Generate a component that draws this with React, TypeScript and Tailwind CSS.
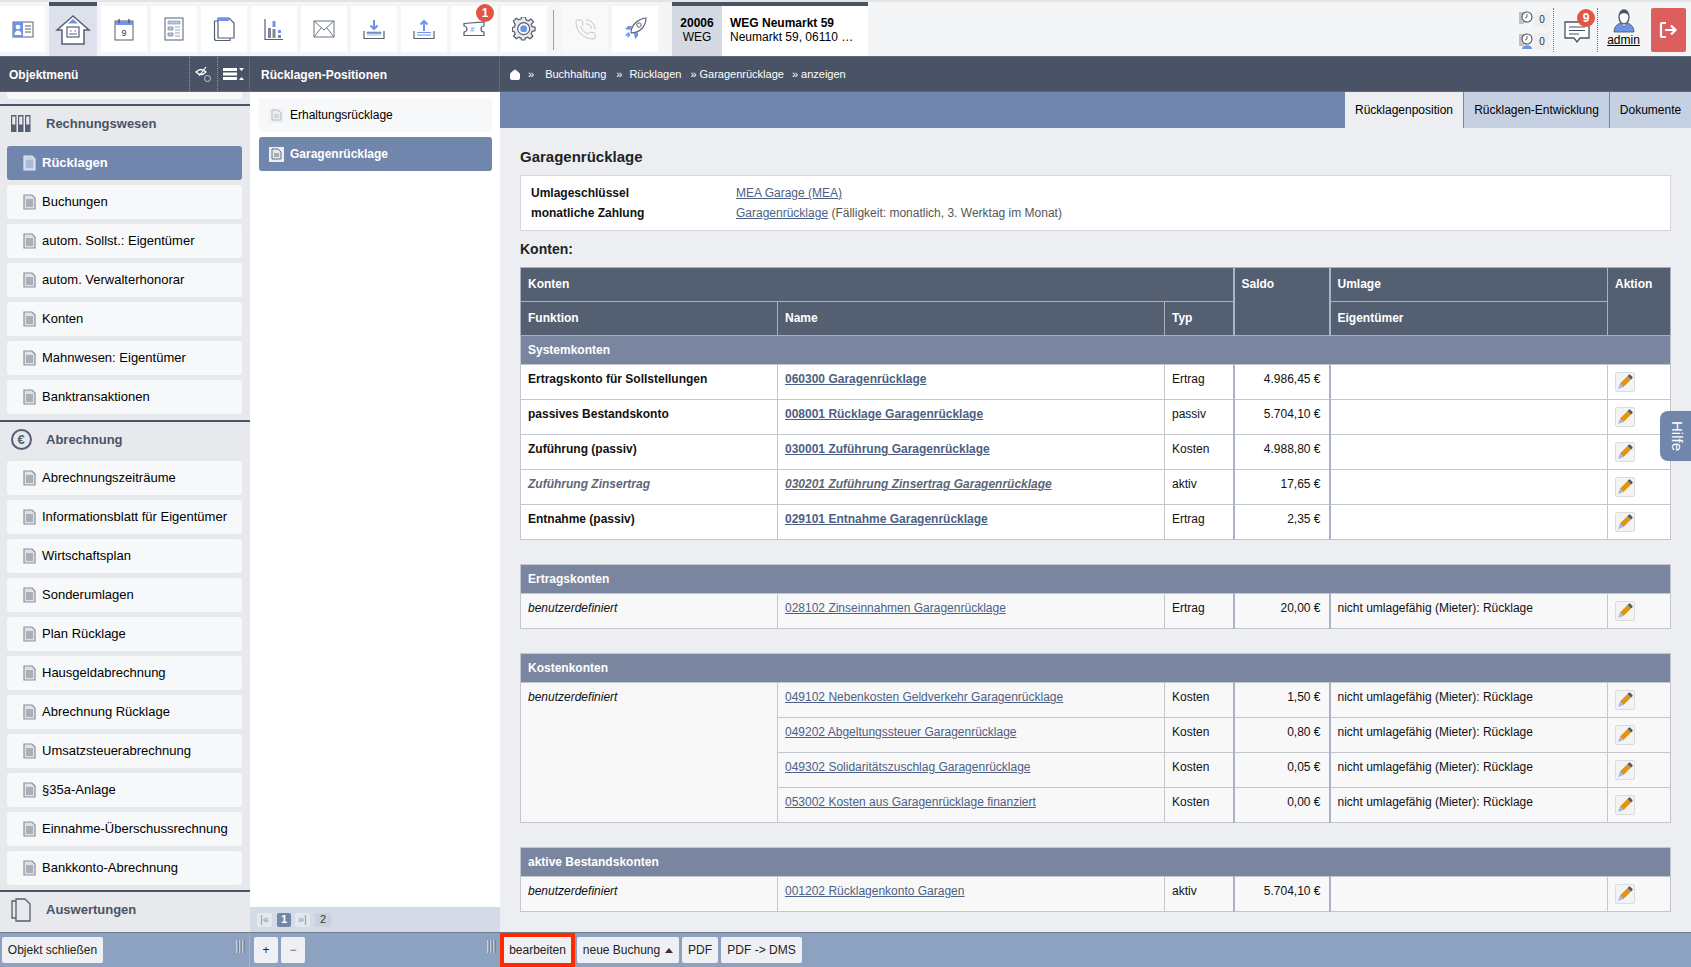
import React from "react";
import { Home, PhoneCall } from "lucide-react";

const FONT = "font-['Liberation_Sans',Arial,sans-serif]";
const BLUE = "#6f93e8";

const DocIcon = ({ light }: { light?: boolean }) => (
  <svg width="13" height="16" viewBox="0 0 13 16" className="shrink-0">
    <path d="M1 1h8l3 3v11H1z" fill={light ? "#c9d3e6" : "#dfe1e6"} stroke={light ? "#dfe5f0" : "#8b909c"} strokeWidth="1.200" />
    <path d="M3 6h7M3 8h7M3 10h7M3 12h7" stroke={light ? "#8ea1c4" : "#777c88"} strokeWidth="1" />
  </svg>
);

const SquareDoc = ({ active }: { active?: boolean }) => (
  <span className={`flex h-[15px] w-[15px] items-center justify-center ${active ? "bg-[#eceef3]" : "bg-[#f0f1f3]"}`}>
    <svg width="11" height="12" viewBox="0 0 11 12">
      <path d="M1 1h6l3 3v7H1z" fill={active ? "#e6e8ec" : "#eceef0"} stroke={active ? "#666f80" : "#b5b8bf"} />
      <path d="M3 6h5M3 8h5" stroke={active ? "#666f80" : "#b5b8bf"} />
    </svg>
  </span>
);

const Pencil = () => (
  <span className="mt-[7px] ml-[7px] flex h-[20px] w-[20px] items-center justify-center rounded-[2px] border border-[#dcdcdc] bg-[#f3f3f3]">
    <svg width="16" height="16" viewBox="0 0 16 16">
      <path d="M3 9.500 10.500 2l3.500 3.500L6.500 13z" fill="#e09411" />
      <path d="M10.500 2l1.300-1.300a1 1 0 0 1 1.400 0l2.100 2.100a1 1 0 0 1 0 1.400L14 5.500z" fill="#4f5a6e" />
      <path d="M3 9.500 6.500 13 1 15z" fill="#9db8f2" />
    </svg>
  </span>
);

const stroke = { fill: "none", stroke: "#565f72", strokeWidth: 1.2 };

const toolIcons: React.ReactNode[] = [
  <svg key="card" width="22" height="17" viewBox="0 0 22 17">
    <rect x="1" y="1" width="20" height="15" fill="#fff" stroke="#565f72" />
    <rect x="1" y="1" width="10" height="15" fill={BLUE} />
    <circle cx="6" cy="6" r="2.300" fill="#fff" />
    <path d="M2.500 14c0-6 7-6 7 0z" fill="#fff" />
    <path d="M13 5h6M13 8h6M13 11h6" stroke="#565f72" />
  </svg>,
  <svg key="home" width="36" height="32" viewBox="0 0 36 32">
    <path d="M18 2 2 16h5v14h22V16h5z" fill="#fff" stroke="#565f72" strokeWidth="1.500" />
    <path d="M18 5l-5 4.500h10z" fill={BLUE} />
    <rect x="12" y="13" width="12" height="10" {...stroke} />
    <path d="M15 17h1.500M19.500 17H21M14 20h8" stroke="#565f72" />
  </svg>,
  <svg key="cal" width="20" height="23" viewBox="0 0 20 23">
    <rect x="1" y="3" width="18" height="19" fill="#fff" stroke="#565f72" />
    <rect x="1" y="3" width="18" height="4" fill={BLUE} />
    <path d="M5 1v4M15 1v4" stroke="#565f72" strokeWidth="1.500" />
    <text x="10" y="18" fontSize="9" textAnchor="middle" fill="#333" fontFamily="Liberation Sans">9</text>
  </svg>,
  <svg key="form" width="20" height="24" viewBox="0 0 20 24">
    <rect x="1" y="1" width="18" height="22" fill="#fff" stroke="#565f72" />
    <rect x="4" y="4" width="12" height="3" fill="#b4c6ee" stroke="#7f8ca5" strokeWidth=".6" />
    <path d="M4 10h5v3H4zM11 10h5M11 13h5M4 16h5v3H4zM11 16h5M11 19h5" fill="#b4c6ee" stroke="#7f8ca5" strokeWidth=".8" />
  </svg>,
  <svg key="copy" width="22" height="25" viewBox="0 0 22 25">
    <path d="M5 1h11l5 5v15H5z" fill="#fff" stroke="#565f72" strokeWidth="1.200" />
    <path d="M5 1h11v3H5z" fill={BLUE} />
    <path d="M5 4H1.500v17.500a2 2 0 0 0 2 2H17V21" {...stroke} />
  </svg>,
  <svg key="chart" width="20" height="23" viewBox="0 0 20 23">
    <path d="M1 1v20.500h18" {...stroke} />
    <rect x="4" y="10" width="3" height="10" fill="#7e8798" />
    <rect x="8.500" y="3" width="3" height="6" fill={BLUE} />
    <rect x="8.500" y="11" width="3" height="9" fill="#7e8798" />
    <rect x="14" y="12" width="3" height="3" fill={BLUE} />
    <rect x="14" y="17" width="3" height="3" fill="#7e8798" />
  </svg>,
  <svg key="mail" width="22" height="18" viewBox="0 0 22 18">
    <rect x="1" y="1" width="20" height="16" fill="#fff" stroke="#6a7385" />
    <path d="M1 1l10 9 10-9M1 17l7.500-9.500M21 17l-7.500-9.500" fill="none" stroke="#6a7385" />
  </svg>,
  <svg key="down" width="22" height="21" viewBox="0 0 22 21">
    <path d="M1 12v7.500h20V12" {...stroke} />
    <path d="M11 1v8M7.500 6.500 11 10l3.500-3.500" fill="none" stroke={BLUE} strokeWidth="2" />
    <path d="M4 13h14v1.500H4zM4 16h14" fill={BLUE} stroke="#7e8798" strokeWidth=".6" />
  </svg>,
  <svg key="up" width="22" height="21" viewBox="0 0 22 21">
    <path d="M1 12v7.500h20V12" {...stroke} />
    <path d="M11 12V2M7.500 5.500 11 2l3.500 3.500" fill="none" stroke={BLUE} strokeWidth="2" />
    <path d="M4 13.500h14M4 16h14" stroke={BLUE} strokeWidth="1" />
  </svg>,
  <svg key="ticket" width="22" height="16" viewBox="0 0 22 16">
    <path d="M1 2.500 21 1v4a3 3 0 0 0 0 6v3.500H1V11a3 3 0 0 0 0-6z" fill="#fff" stroke="#565f72" strokeWidth="1.200" />
    <text x="9.500" y="11" fontSize="7" textAnchor="middle" fill={BLUE} fontFamily="Liberation Sans">#</text>
  </svg>,
  <svg key="gear" width="24" height="24" viewBox="0 0 24 24">
    <path d="M10 1h4l.6 3 2.400 1 2.600-1.700 2.800 2.800L20 8.700l1 2.400 3 .6v3.600l-3 .6-1 2.400 1.700 2.600-2.800 2.800-2.600-1.700-2.400 1-.6 2H10l-.6-2-2.400-1-2.600 1.700-2.800-2.800L3.300 18.700l-1-2.400-2-.6v-3.600l2-.6 1-2.400L1.600 5.100l2.800-2.800L7 4l2.400-1z" transform="translate(0 -1) scale(.96)" fill="#e7e9ed" stroke="#565f72" strokeWidth="1.300" />
    <circle cx="11.700" cy="11.700" r="6" fill="#fff" stroke="#565f72" strokeWidth="1.200" />
    <circle cx="11.700" cy="11.700" r="3.500" fill={BLUE} />
  </svg>,
];

const ToolButton = ({ children, active, dim, badge }: { children?: React.ReactNode; active?: boolean; dim?: boolean; badge?: string }) => (
  <div className={`relative flex shrink-0 items-center justify-center ${active ? "mt-[-4px] h-[54px] w-[48px] border-t-4 border-[#4a5365] bg-[#dde1eb] pb-[3px]" : `h-[46px] w-[46px] ${dim ? "bg-[#f9f9f9]" : "bg-white"}`}`}>
    {children}
    {badge && (
      <span className="absolute top-[-2px] right-[3px] flex h-[18px] w-[18px] items-center justify-center rounded-full bg-[#e25545] text-[12px] font-bold text-white">
        {badge}
      </span>
    )}
  </div>
);

const TopBar = () => (
  <div className="flex h-[56px] shrink-0 border-t-2 border-[#e4e4e4] bg-[#f4f5f6] pt-[4px]">
    <div className="flex gap-[4px]">
      <div className="w-[45px] overflow-hidden">
        <ToolButton>{toolIcons[0]}</ToolButton>
      </div>
      <ToolButton active>{toolIcons[1]}</ToolButton>
      {toolIcons.slice(2).map((icon, i) => (
        <ToolButton key={i} badge={i === 7 ? "1" : undefined}>{icon}</ToolButton>
      ))}
      <div className="mt-[4px] ml-[2px] h-[40px] w-[1px] bg-[#9a9da3]" />
      <div className="ml-[4px]">
        <ToolButton dim><PhoneCall size={23} strokeWidth={1} color="#bfc1c6" /></ToolButton>
      </div>
      <ToolButton>
        <svg width="24" height="24" viewBox="0 0 24 24">
          <path d="M8 16C8 9 14 2 23 1c0 8-6 15-15 15z" fill="#fff" stroke="#565f72" strokeWidth="1.100" />
          <circle cx="16" cy="8" r="2.200" fill="#fff" stroke="#565f72" />
          <path d="M9 9H5l-3 3 5 1zM15 15v4l-3 3-1-5z" fill={BLUE} />
          <path d="M6 15l-4 3 1 1 2-1-1 3 3-2 0-1" fill={BLUE} />
        </svg>
      </ToolButton>
    </div>
    <div className="mt-[-4px] ml-[14px] flex h-[54px] w-[196px] border-t-4 border-[#4a5365] bg-white text-[12px] leading-[14px] text-black">
      <div className="flex w-[50px] flex-col items-center justify-center bg-[#d5d9e3] pb-[3px]">
        <span className="font-bold">20006</span>
        <span>WEG</span>
      </div>
      <div className="flex flex-1 flex-col justify-center pb-[3px] pl-[8px]">
        <span className="font-bold">WEG Neumarkt 59</span>
        <span>Neumarkt 59, 06110 …</span>
      </div>
    </div>
    <div className="mt-[2px] ml-auto flex h-[44px] items-stretch pr-[5px]">
      <div className="flex w-[33px] flex-col justify-center gap-[6px] text-[10px] text-[#333]">
        {[0, 1].map(i => (
          <div key={i} className="flex items-center gap-[1px]">
            <svg width="14" height="16" viewBox="0 0 14 16">
              <path d="M0 2.500h5M0 5.500h3M0 8.500h3M0 11.500h5" stroke="#b7b7b7" strokeWidth="2.400" />
              <circle cx="8" cy="6" r="5" fill="#fff" stroke="#4a5365" strokeWidth="1.100" />
              <path d="M8 3V6L6 7" fill="none" stroke="#4a5365" strokeWidth=".9" />
              {i === 1 && <path d="M3 16c0-5 10-5 10 0z" fill={BLUE} />}
            </svg>
            <span className="flex h-[16px] w-[16px] items-center justify-center bg-[#eeeff1]">0</span>
          </div>
        ))}
      </div>
      <div className="relative ml-[1px] w-[45px] border-x border-dotted border-[#777]">
        <svg width="26" height="23" viewBox="0 0 26 23" className="absolute top-[13px] left-[10px]">
          <path d="M1 1h24v16H16l-3 4-3-4H1z" fill="#fff" stroke="#4a5365" strokeWidth="1.300" />
          <path d="M5 6h16M5 9.500h16M5 13h10" stroke="#4a5365" strokeWidth="1.200" />
        </svg>
        <span className="absolute top-[1px] right-[2px] flex h-[18px] w-[18px] items-center justify-center rounded-full bg-[#e25545] text-[12px] font-bold text-white">9</span>
      </div>
      <div className="flex w-[53px] flex-col items-center pr-[2px] text-[12px] leading-[14px] text-black">
        <svg width="22" height="25" viewBox="0 0 22 25">
          <path d="M1 24c0-6 4-8 6-9l4 4 4-4c2 1 6 3 6 9z" fill={BLUE} stroke="#4a5365" strokeWidth=".8" />
          <ellipse cx="11" cy="9" rx="5" ry="7" fill="#fff" stroke="#4a5365" strokeWidth="1.300" />
          <path d="M6 8q1-6 5-6t5 6q-2-3-5-3T6 8z" fill="#4a5365" />
        </svg>
        <span className="underline">admin</span>
      </div>
      <div className="flex w-[35px] items-center justify-center rounded-[2px] bg-[#dd5f5d]">
        <svg width="19" height="18" viewBox="0 0 19 18" fill="none" stroke="#fff" strokeWidth="2.200">
          <path d="M7 2H3a1 1 0 0 0-1 1v12a1 1 0 0 0 1 1h4" />
          <path d="M6 9h10M12 4.500 16.500 9 12 13.500" />
        </svg>
      </div>
    </div>
  </div>
);

const HeaderBar = () => (
  <div className="flex h-[36px] shrink-0 border-y border-[#5e687b] bg-[#4a5365] text-white">
    <div className="flex w-[250px] items-center border-r border-[#606a7c] pl-[9px] text-[12px] font-bold">
      <span className="flex-1 pt-[1px]">Objektmenü</span>
      <div className="flex h-full w-[28px] items-center justify-center border-l border-dotted border-[#8e96a5]">
        <svg width="17" height="18" viewBox="0 0 17 18" fill="none" stroke="#fff">
          <path d="M1 7q5-5 10 0-5 5-10 0zM4 11 11 2" strokeWidth="1.200" />
          <circle cx="12.500" cy="13.500" r="3" stroke="#c9cdd4" />
        </svg>
      </div>
      <div className="flex h-full w-[32px] items-center justify-center border-l border-dotted border-[#8e96a5]">
        <svg width="22" height="12" viewBox="0 0 22 12" fill="#fff">
          <rect x="0" y="0" width="14" height="3" />
          <rect x="0" y="4.500" width="14" height="3" />
          <rect x="0" y="9" width="14" height="3" />
          <path d="M16 0h5l-2.500 3zM16 12h5l-2.500-3z" />
        </svg>
      </div>
    </div>
    <div className="flex w-[250px] items-center border-r border-[#606a7c] pt-[1px] pl-[11px] text-[12px] font-bold">Rücklagen-Positionen</div>
    <div className="flex flex-1 items-center pt-[1px] text-[11px]">
      <Home size={12} fill="#fff" className="ml-[9px]" />
      <span className="ml-[7px]">»</span>
      <span className="ml-[11px]">Buchhaltung</span>
      <span className="ml-[10px]">»</span>
      <span className="ml-[7px]">Rücklagen</span>
      <span className="ml-[9px]">»</span>
      <span className="ml-[3px]">Garagenrücklage</span>
      <span className="ml-[8px]">»</span>
      <span className="ml-[3px]">anzeigen</span>
    </div>
  </div>
);

const SideItem = ({ label, active }: { label: string; active?: boolean }) => (
  <div className={`flex h-[34px] items-center gap-[6px] rounded-[3px] pl-[16px] text-[13px] ${active ? "bg-[#7186ad] font-bold text-white" : "bg-[#f7f8fa] text-black"}`}>
    <DocIcon light={active} />
    <span>{label}</span>
  </div>
);

const SideHeader = ({ icon, label, mt }: { icon: React.ReactNode; label: string; mt: string }) => (
  <div className={`${mt} flex h-[36px] items-center border-t-[2px] border-[#4a5365] pt-[1px]`}>
    <span className="flex w-[46px] shrink-0 justify-center pr-[4px]">{icon}</span>
    <span className="text-[13px] font-bold text-[#4a5365]">{label}</span>
  </div>
);

const group1 = ["Rücklagen", "Buchungen", "autom. Sollst.: Eigentümer", "autom. Verwalterhonorar", "Konten", "Mahnwesen: Eigentümer", "Banktransaktionen"];
const group2 = ["Abrechnungszeiträume", "Informationsblatt für Eigentümer", "Wirtschaftsplan", "Sonderumlagen", "Plan Rücklage", "Hausgeldabrechnung", "Abrechnung Rücklage", "Umsatzsteuerabrechnung", "§35a-Anlage", "Einnahme-Überschussrechnung", "Bankkonto-Abrechnung"];

const Sidebar = () => (
  <div className="h-full w-[250px] shrink-0 overflow-hidden bg-[#e7e9ed]">
    <div className="mr-[8px] ml-[7px] h-[7px] rounded-b-[3px] bg-[#f7f8fa]" />
    <SideHeader
      mt="mt-[5px]"
      label="Rechnungswesen"
      icon={
        <svg width="20" height="17" viewBox="0 0 20 17" fill="#565f72">
          <path d="M0 0h5.500v17H0zM7 0h5.500v17H7zM14 0h5.500v17H14z" />
          <path d="M1.200 1.500h3.100v8H1.200zM8.200 1.500h3.100v8H8.200zM15.200 1.500h3.100v8h-3.100z" fill="#e7e9ed" />
        </svg>
      }
    />
    <div className="mt-[6px] mr-[8px] ml-[7px] flex flex-col gap-[5px]">
      {group1.map((l, i) => <SideItem key={l} label={l} active={i === 0} />)}
    </div>
    <SideHeader
      mt="mt-[6px]"
      label="Abrechnung"
      icon={
        <span className="flex h-[21px] w-[21px] items-center justify-center rounded-full border-2 border-[#565f72] text-[13px] font-bold leading-none text-[#565f72]">€</span>
      }
    />
    <div className="mt-[5px] mr-[8px] ml-[7px] flex flex-col gap-[5px]">
      {group2.map(l => <SideItem key={l} label={l} />)}
    </div>
    <SideHeader
      mt="mt-[5px]"
      label="Auswertungen"
      icon={
        <svg width="20" height="24" viewBox="0 0 20 24" fill="none" stroke="#565f72" strokeWidth="1.300">
          <path d="M5 1h9l5 5v17H5z" />
          <path d="M5 3H1v17h4" />
        </svg>
      }
    />
  </div>
);

const MiddleColumn = () => (
  <div className="flex h-full w-[250px] shrink-0 flex-col bg-white">
    <div className="flex flex-1 flex-col gap-[5px] pt-[6px] pr-[8px] pl-[9px] text-[12px]">
      <div className="flex h-[34px] items-center gap-[6px] rounded-[3px] bg-[#f7f8fa] pl-[10px] text-black">
        <SquareDoc />
        <span>Erhaltungsrücklage</span>
      </div>
      <div className="flex h-[34px] items-center gap-[6px] rounded-[3px] bg-[#7186ad] pl-[10px] font-bold text-white">
        <SquareDoc active />
        <span>Garagenrücklage</span>
      </div>
    </div>
    <div className="flex h-[25px] items-center gap-[4px] bg-[#d5dbe6] pl-[7px] text-[11px] text-[#333]">
      <span className="flex h-[14px] w-[15px] items-center justify-center rounded-[2px] bg-[#e4e8ef] text-[#8a93a5]">|«</span>
      <span className="ml-[1px] flex h-[14px] w-[14px] items-center justify-center rounded-[2px] bg-[#7186ad] font-bold text-white">1</span>
      <span className="flex h-[14px] w-[15px] items-center justify-center rounded-[2px] bg-[#e4e8ef] text-[#8a93a5]">»|</span>
      <span className="ml-[1px] flex h-[14px] w-[16px] items-center justify-center rounded-[2px] bg-[#c9d1df]">2</span>
    </div>
  </div>
);

type Row = { fn?: string; name: string; typ: string; saldo: string; umlage?: string; tone?: "bold" | "muted" };

const systemRows: Row[] = [
  { fn: "Ertragskonto für Sollstellungen", name: "060300 Garagenrücklage", typ: "Ertrag", saldo: "4.986,45 €", tone: "bold" },
  { fn: "passives Bestandskonto", name: "008001 Rücklage Garagenrücklage", typ: "passiv", saldo: "5.704,10 €", tone: "bold" },
  { fn: "Zuführung (passiv)", name: "030001 Zuführung Garagenrücklage", typ: "Kosten", saldo: "4.988,80 €", tone: "bold" },
  { fn: "Zuführung Zinsertrag", name: "030201 Zuführung Zinsertrag Garagenrücklage", typ: "aktiv", saldo: "17,65 €", tone: "muted" },
  { fn: "Entnahme (passiv)", name: "029101 Entnahme Garagenrücklage", typ: "Ertrag", saldo: "2,35 €", tone: "bold" },
];

const UMLAGE = "nicht umlagefähig (Mieter): Rücklage";

const costRows: Row[] = [
  { name: "049102 Nebenkosten Geldverkehr Garagenrücklage", typ: "Kosten", saldo: "1,50 €", umlage: UMLAGE },
  { name: "049202 Abgeltungssteuer Garagenrücklage", typ: "Kosten", saldo: "0,80 €", umlage: UMLAGE },
  { name: "049302 Solidaritätszuschlag Garagenrücklage", typ: "Kosten", saldo: "0,05 €", umlage: UMLAGE },
  { name: "053002 Kosten aus Garagenrücklage finanziert", typ: "Kosten", saldo: "0,00 €", umlage: UMLAGE },
];

const Cols = () => (
  <colgroup>
    <col className="w-[257px]" />
    <col className="w-[387px]" />
    <col className="w-[69px]" />
    <col className="w-[96px]" />
    <col className="w-[278px]" />
    <col className="w-[63px]" />
  </colgroup>
);

const td = "h-[35px] border border-[#c3c6cc] px-[7px] pt-[7px] align-top";
const saldoTd = "h-[35px] border border-x-2 border-y-[#c3c6cc] border-x-[#a9b4c8] px-[8px] pt-[7px] text-right align-top";
const th = "border border-[#aab0bb] px-[7px] text-left align-top font-bold text-white";

const GroupRow = ({ label }: { label: string }) => (
  <tr>
    <th colSpan={6} className="h-[29px] border border-[#c3c6cc] bg-[#7a869f] px-[7px] text-left font-bold text-white">{label}</th>
  </tr>
);

const ValueCells = ({ row, plain, bg }: { row: Row; plain?: boolean; bg: string }) => (
  <>
    <td className={`${td} ${bg}`}>
      <a className={`underline ${plain ? "text-[#4d5f85]" : row.tone === "muted" ? "font-bold italic text-[#5d6676]" : "font-bold text-[#4d5f85]"}`}>{row.name}</a>
    </td>
    <td className={`${td} ${bg}`}>{row.typ}</td>
    <td className={`${saldoTd} ${bg}`}>{row.saldo}</td>
    <td className={`${td} ${bg}`}>{row.umlage}</td>
    <td className={`h-[35px] border border-[#c3c6cc] p-0 align-top ${bg}`}><Pencil /></td>
  </>
);

const tableClass = "w-[1150px] table-fixed border-collapse text-[12px] leading-[14px] text-[#111]";

const KontenTable = () => (
  <table className={tableClass}>
    <Cols />
    <thead className="bg-[#545f72]">
      <tr>
        <th colSpan={3} className={`${th} h-[34px] pt-[9px]`}>Konten</th>
        <th rowSpan={2} className={`${th} border-x-2 border-x-[#a9b4c8] pt-[9px]`}>Saldo</th>
        <th className={`${th} h-[34px] pt-[9px]`}>Umlage</th>
        <th rowSpan={2} className={`${th} pt-[9px]`}>Aktion</th>
      </tr>
      <tr>
        <th className={`${th} h-[34px] pt-[9px]`}>Funktion</th>
        <th className={`${th} pt-[9px]`}>Name</th>
        <th className={`${th} pt-[9px]`}>Typ</th>
        <th className={`${th} pt-[9px]`}>Eigentümer</th>
      </tr>
    </thead>
    <tbody>
      <GroupRow label="Systemkonten" />
      {systemRows.map(r => (
        <tr key={r.name}>
          <td className={`${td} bg-white font-bold ${r.tone === "muted" ? "italic text-[#5d6676]" : ""}`}>{r.fn}</td>
          <ValueCells row={r} bg="bg-white" />
        </tr>
      ))}
    </tbody>
  </table>
);

const SubTable = ({ label, rows }: { label: string; rows: Row[] }) => (
  <table className={`${tableClass} mt-[24px]`}>
    <Cols />
    <tbody>
      <GroupRow label={label} />
      {rows.map((r, i) => (
        <tr key={r.name}>
          {i === 0 && (
            <td rowSpan={rows.length} className={`${td} bg-[#f8f8f9] italic`}>benutzerdefiniert</td>
          )}
          <ValueCells row={r} plain bg="bg-[#f8f8f9]" />
        </tr>
      ))}
    </tbody>
  </table>
);

const Main = () => (
  <div className="relative flex h-full min-w-0 flex-1 flex-col bg-[#eceef2]">
    <div className="flex h-[36px] shrink-0 justify-end bg-[#7186ad] text-[12px] text-black">
      <div className="flex w-[118px] items-center justify-center bg-[#eceef2]">Rücklagenposition</div>
      <div className="flex w-[146px] items-center justify-center border-l border-[#7186ad] bg-[#c5d0e2]">Rücklagen-Entwicklung</div>
      <div className="flex w-[82px] items-center justify-center border-l border-[#7186ad] bg-[#c5d0e2]">Dokumente</div>
    </div>
    <div className="flex-1 overflow-hidden pr-[20px] pl-[20px]">
      <h1 className="mt-[20px] text-[15px] leading-[18px] font-bold text-[#222]">Garagenrücklage</h1>
      <div className="mt-[9px] flex h-[56px] w-[1151px] flex-col justify-center gap-[6px] border border-[#d4d6da] bg-white pl-[10px] text-[12px] leading-[14px] text-[#111]">
        <div className="flex">
          <span className="w-[205px] font-bold">Umlageschlüssel</span>
          <a className="text-[#4d5f85] underline">MEA Garage (MEA)</a>
        </div>
        <div className="flex">
          <span className="w-[205px] font-bold">monatliche Zahlung</span>
          <span className="text-[#555]"><a className="text-[#4d5f85] underline">Garagenrücklage</a> (Fälligkeit: monatlich, 3. Werktag im Monat)</span>
        </div>
      </div>
      <h2 className="mt-[9px] mb-[9px] text-[14px] leading-[18px] font-bold text-[#222]">Konten:</h2>
      <KontenTable />
      <SubTable label="Ertragskonten" rows={[{ name: "028102 Zinseinnahmen Garagenrücklage", typ: "Ertrag", saldo: "20,00 €", umlage: UMLAGE }]} />
      <SubTable label="Kostenkonten" rows={costRows} />
      <SubTable label="aktive Bestandskonten" rows={[{ name: "001202 Rücklagenkonto Garagen", typ: "aktiv", saldo: "5.704,10 €" }]} />
    </div>
    <div className="absolute top-[319px] right-0 flex h-[50px] w-[31px] items-center justify-center rounded-l-[8px] bg-[#7186ad] pl-[3px] text-[15px] text-white [writing-mode:vertical-rl]">Hilfe</div>
  </div>
);

const barBtn = "flex h-[26px] items-center whitespace-nowrap rounded-[2px] bg-[#eef0f3] px-[6px] text-[12px] text-[#222]";

const Grip = () => (
  <svg width="9" height="13" viewBox="0 0 9 13" className="mt-[3px]">
    <path d="M1 0v13M4 0v13M7 0v13" stroke="#fff" strokeWidth="1" />
    <path d="M2 0v13M5 0v13M8 0v13" stroke="#4a5365" strokeWidth=".7" />
  </svg>
);

const BottomBar = () => (
  <div className="flex h-[35px] shrink-0 border-t border-[#6f7a8e] bg-[#8da1c0]">
    <div className="flex w-[250px] items-start justify-between border-r border-[#a5b4cc] pt-[4px] pr-[4px] pl-[2px]">
      <div className={`${barBtn} w-[101px] justify-center px-0`}>Objekt schließen</div>
      <Grip />
    </div>
    <div className="flex w-[250px] items-start gap-[3px] pt-[4px] pr-[4px] pl-[4px]">
      <div className={`${barBtn} w-[24px] justify-center px-0`}>+</div>
      <div className={`${barBtn} w-[24px] justify-center bg-[#b5c1d6] px-0 text-[#667]`}>−</div>
      <div className="ml-auto"><Grip /></div>
    </div>
    <div className="flex items-start">
      <div className="flex h-[34px] w-[75px] items-center justify-center border-[4px] border-[#ff2a00]">
        <div className="flex h-[26px] w-full items-center justify-center bg-[#eef0f3] text-[12px] text-[#222]">bearbeiten</div>
      </div>
      <div className="flex gap-[3px] pt-[4px] pl-[2px]">
        <div className={`${barBtn} w-[102px] justify-center gap-[5px] px-0`}>
          neue Buchung
          <span className="h-0 w-0 border-x-[4px] border-b-[5px] border-x-transparent border-b-[#333]" />
        </div>
        <div className={`${barBtn} w-[36px] justify-center px-0`}>PDF</div>
        <div className={`${barBtn} w-[81px] justify-center px-0`}>PDF -&gt; DMS</div>
      </div>
    </div>
  </div>
);

export default function App() {
  return (
    <div className={`${FONT} flex h-[967px] w-[1691px] flex-col overflow-hidden bg-white`}>
      <TopBar />
      <HeaderBar />
      <div className="flex min-h-0 flex-1">
        <Sidebar />
        <MiddleColumn />
        <Main />
      </div>
      <BottomBar />
    </div>
  );
}
